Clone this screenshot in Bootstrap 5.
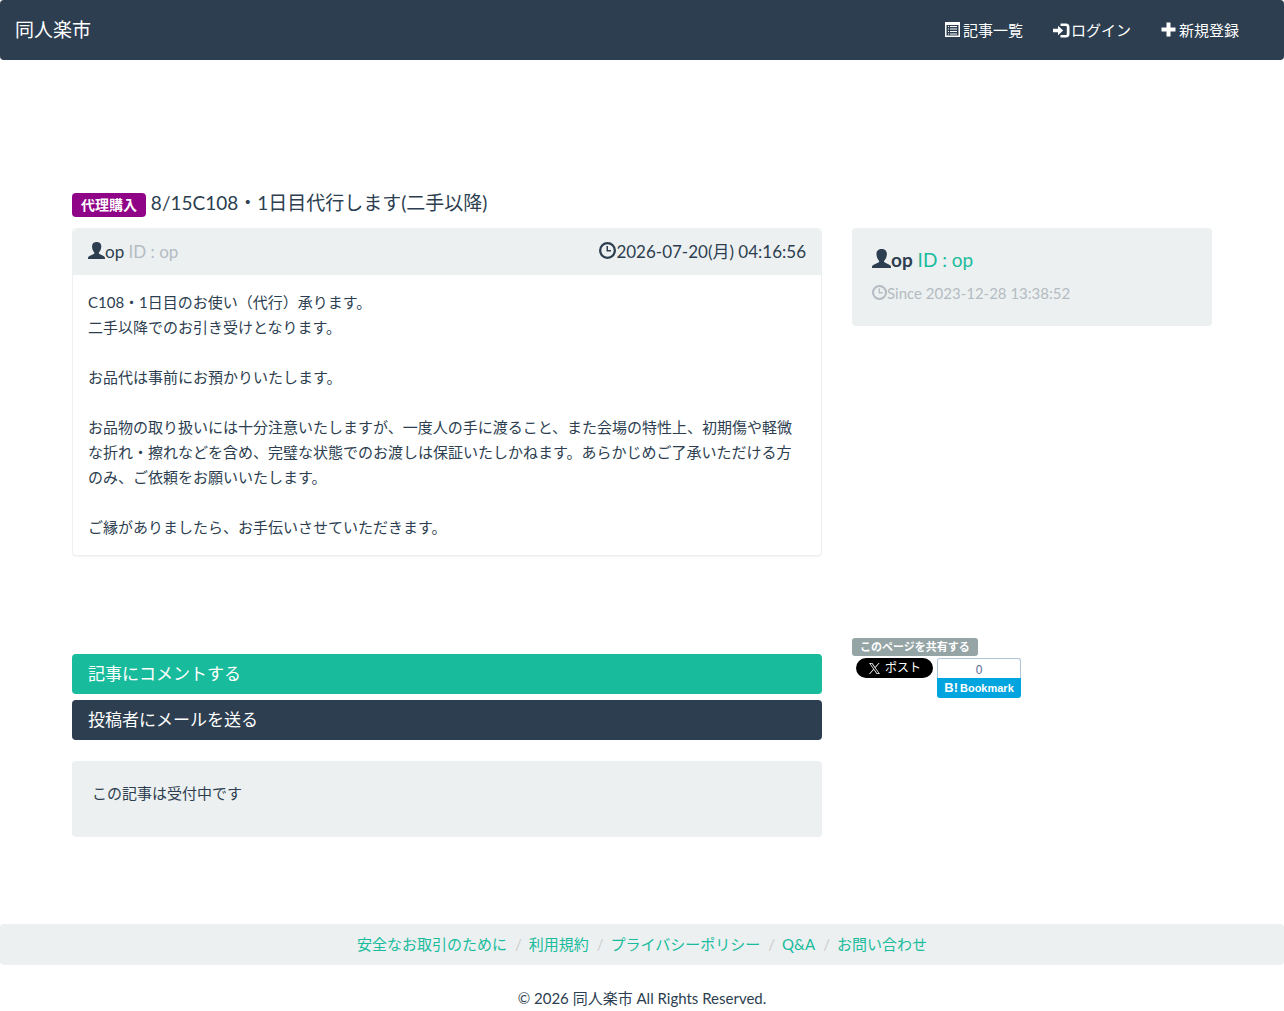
<!DOCTYPE html>
<html lang="ja">
<head>
<meta charset="utf-8">
<meta name="viewport" content="width=device-width, initial-scale=1">
<title>8/15C108・1日目代行します(二手以降) | 同人楽市</title>
<link href="https://cdn.jsdelivr.net/npm/bootstrap@5.3.0/dist/css/bootstrap.min.css" rel="stylesheet">
<style>
:root{--navy:#2c3e50;--teal:#18bc9c;--pale:#ecf0f1;--faded:#b4bcc2}
body{font-family:Lato,"Noto Sans CJK JP",sans-serif;font-size:15px;line-height:25px;color:var(--navy)}
a{color:var(--teal);text-decoration:none}
.glyph{width:1em;height:1em;fill:currentColor;vertical-align:-1px;display:inline-block}
.site-nav{background:var(--navy);border-radius:4px;min-height:60px;padding:0 15px;margin-bottom:130px}
.site-nav .navbar-brand{font-size:19px;line-height:28px;padding:0;color:#fff}
.site-nav .navbar-nav .nav-link{color:#fff;padding:18px 15px 17px}
.site-nav .navbar-nav{margin-right:15px}
.site-nav .navbar-nav .nav-link:hover{color:var(--teal)}
.icon-gap{margin-right:3px}
.page-box{max-width:1170px;--bs-gutter-x:30px}
.page-box .row{--bs-gutter-x:30px}
.post-title{font-size:19px;line-height:26px;font-weight:400;margin-bottom:11px}
.kind-tag{background:#900488;font-size:14px;line-height:14px;padding:5px 9px;border-radius:4px;vertical-align:baseline}
.post-card{border:1px solid var(--pale);border-radius:4px;box-shadow:0 1px 1px rgba(0,0,0,.05);margin-bottom:82px}
.post-card .card-header{background:var(--pale);border:0;padding:10px 15px;font-size:17px;line-height:26px}
.post-card .card-body{padding:15px}
.faded{color:var(--faded)}
.well-box{background:var(--pale);border-radius:4px;padding:20px}
.member-name{font-size:19px;line-height:24px;margin-bottom:9px}
.post-actions{padding-top:16px;gap:6px;margin-bottom:21px}
.bar-btn{font-size:17px;line-height:24px;padding:8px 16px;border:0;border-radius:4px;color:#fff;text-align:left}
.bar-btn:hover{color:#fff;opacity:.9}
.bar-comment{background:var(--teal)}
.bar-mail{background:var(--navy)}
.state-box{padding-bottom:31px;margin-bottom:87px}
.share-tag{background:#95a5a6;font-size:11px;line-height:12px;padding:3px 8px;border-radius:3px}
.share-row{padding:2px 4px;gap:4px}
.x-post{background:#000;color:#fff;border-radius:10px;height:20px;padding:0 12px;font-size:12px;line-height:20px;gap:4px}
.x-post:hover{color:#fff}
.hatena{width:84px;font-family:"Liberation Sans",sans-serif}
.hatena-count{border:1px solid #b0c4d8;border-bottom:0;border-radius:3px 3px 0 0;height:20px;line-height:22px;font-size:12px;color:#5a6c94}
.hatena-label{background:#00a4de;color:#fff;border-radius:0 0 3px 3px;height:20px;line-height:20px;font-size:11px;font-weight:700;gap:2px}
.hatena-mark{font-size:13px}
.foot-links{background:var(--pale);border-radius:4px;padding:8px 15px;margin-bottom:21px}
.foot-links .breadcrumb-item+.breadcrumb-item{padding-left:8px}
.foot-links .breadcrumb-item+.breadcrumb-item::before{color:#ccc;padding-right:7px}
</style>
</head>
<body>
<svg class="d-none" aria-hidden="true">
  <symbol id="g-user" viewBox="0 0 17 17"><path d="M8.700 0C6 0 4 1.500 4 4.300c0 2.600.9 4.700 2.100 5.900.6.700.4 1.500-.4 1.900L1.500 14C.4 14.500 0 15.200 0 16.200v.8h17v-.8c0-1-.4-1.700-1.500-2.200l-4-1.900c-.8-.4-1-1.200-.4-1.900 1.300-1.200 2.200-3.300 2.200-5.900C13.300 1.500 11.400 0 8.700 0z"/></symbol>
  <symbol id="g-clock" viewBox="0 0 17 17"><path fill-rule="evenodd" d="M8.500 0a8.500 8.500 0 1 0 0 17 8.500 8.500 0 0 0 0-17zm0 2.300a6.200 6.200 0 1 1 0 12.400 6.200 6.200 0 0 1 0-12.400zM7.500 4v5.500H12V8H9V4z"/></symbol>
  <symbol id="g-list" viewBox="0 0 15 15"><path fill-rule="evenodd" d="M0 0h15v15H0zM1.500 3V13.500h12V3zM3 4h1v1H3zM5 4h7v1H5zM3 6.500h1v1H3zM5 6.500h7v1H5zM3 9h1v1H3zM5 9h7v1H5zM3 11.500h1v1H3zM5 11.500h7v1H5z"/></symbol>
  <symbol id="g-login" viewBox="0 0 17 15"><path d="M5 2.800 10.200 7.500 5 12.200V9.300H0V5.700h5zM7.500.5H13c2.300 0 3.500 1.300 3.500 3.500v7c0 2.200-1.200 3.500-3.500 3.500H7.500V12H12.500c1 0 1.300-.4 1.300-1.300V4.300c0-.9-.3-1.300-1.300-1.300h-5z"/></symbol>
  <symbol id="g-plus" viewBox="0 0 15 15"><path d="M5.500.5h4v5h5v4h-5v5h-4v-5h-5v-4h5z"/></symbol>
  <symbol id="g-x" viewBox="0 0 24 24"><path d="M14.260 10.160 23.100 0h-2.100l-7.680 8.820L7.200 0H.1l9.300 13.340L.1 24h2.100l8.130-9.340L16.800 24h7.100zM11.400 13.500l-.95-1.330L2.970 1.560H6.200l6.050 8.560.95 1.330 7.860 11.130h-3.230z"/></symbol>
</svg>

<nav class="navbar navbar-expand site-nav">
  <a class="navbar-brand" href="#">同人楽市</a>
  <ul class="navbar-nav ms-auto">
    <li class="nav-item"><a class="nav-link" href="#"><svg class="glyph icon-gap"><use href="#g-list"/></svg>記事一覧</a></li>
    <li class="nav-item"><a class="nav-link d-flex align-items-center" href="#"><svg width="18" height="15" fill="currentColor"><use href="#g-login" width="17" height="15"/></svg>ログイン</a></li>
    <li class="nav-item"><a class="nav-link" href="#"><svg class="glyph icon-gap"><use href="#g-plus"/></svg>新規登録</a></li>
  </ul>
</nav>

<main class="container-fluid page-box">
  <h1 class="post-title"><span class="badge kind-tag">代理購入</span> 8/15C108・1日目代行します(二手以降)</h1>
  <div class="row">
    <div class="col-8">
      <article class="card post-card">
        <div class="card-header d-flex justify-content-between">
          <span><svg class="glyph"><use href="#g-user"/></svg>op <span class="faded">ID : op</span></span>
          <span><svg class="glyph"><use href="#g-clock"/></svg>2026-07-20(月) 04:16:56</span>
        </div>
        <div class="card-body">
          C108・1日目のお使い（代行）承ります。<br>
          二手以降でのお引き受けとなります。<br><br>
          お品代は事前にお預かりいたします。<br><br>
          お品物の取り扱いには十分注意いたしますが、一度人の手に渡ること、また会場の特性上、初期傷や軽微な折れ・擦れなどを含め、完璧な状態でのお渡しは保証いたしかねます。あらかじめご了承いただける方のみ、ご依頼をお願いいたします。<br><br>
          ご縁がありましたら、お手伝いさせていただきます。
        </div>
      </article>
    </div>
    <aside class="col-4">
      <div class="well-box">
        <div class="member-name"><svg class="glyph"><use href="#g-user"/></svg><strong>op</strong> <a href="#">ID : op</a></div>
        <div class="faded"><svg class="glyph"><use href="#g-clock"/></svg>Since 2023-12-28 13:38:52</div>
      </div>
    </aside>
  </div>
  <div class="row">
    <div class="col-8">
      <div class="post-actions d-flex flex-column">
        <button type="button" class="btn bar-btn bar-comment">記事にコメントする</button>
        <button type="button" class="btn bar-btn bar-mail">投稿者にメールを送る</button>
      </div>
      <div class="well-box state-box">この記事は受付中です</div>
    </div>
    <div class="col-4">
      <div class="d-flex"><span class="badge share-tag">このページを共有する</span></div>
      <div class="share-row d-flex align-items-start">
        <a class="x-post d-flex align-items-center" href="#"><svg width="13" height="11" fill="currentColor"><use href="#g-x" width="13" height="11"/></svg>ポスト</a>
        <a class="hatena text-center" href="#">
          <div class="hatena-count">0</div>
          <div class="hatena-label d-flex justify-content-center"><span class="hatena-mark">B!</span><span>Bookmark</span></div>
        </a>
      </div>
    </div>
  </div>
</main>

<footer>
  <ol class="breadcrumb foot-links justify-content-center">
    <li class="breadcrumb-item"><a href="#">安全なお取引のために</a></li>
    <li class="breadcrumb-item"><a href="#">利用規約</a></li>
    <li class="breadcrumb-item"><a href="#">プライバシーポリシー</a></li>
    <li class="breadcrumb-item"><a href="#">Q&amp;A</a></li>
    <li class="breadcrumb-item"><a href="#">お問い合わせ</a></li>
  </ol>
  <p class="text-center mb-0">© 2026 同人楽市 All Rights Reserved.</p>
</footer>
<script src="https://cdn.jsdelivr.net/npm/bootstrap@5.3.0/dist/js/bootstrap.bundle.min.js"></script>
</body>
</html>
